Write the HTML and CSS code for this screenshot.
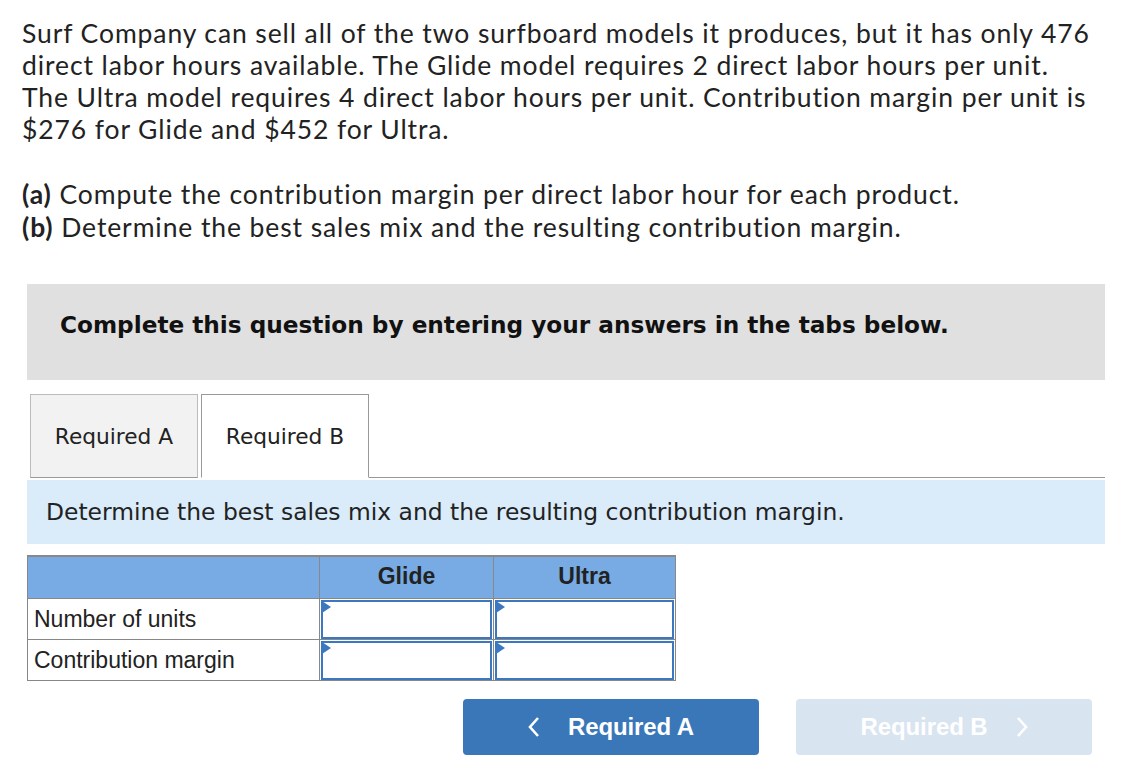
FILE: index.html
```html
<!DOCTYPE html>
<html>
<head>
<meta charset="utf-8">
<link rel="stylesheet" href="styles.css">
</head>
<body>
<div class="page">
  <p class="intro">Surf Company can sell all of the two surfboard models it produces, but it has only 476 direct labor hours available. The Glide model requires 2 direct labor hours per unit. The Ultra model requires 4 direct labor hours per unit. Contribution margin per unit is $276 for Glide and $452 for Ultra.</p>
  <p class="parts"><b>(a)</b> Compute the contribution margin per direct labor hour for each product.<br><b>(b)</b> Determine the best sales mix and the resulting contribution margin.</p>

  <div class="notice">Complete this question by entering your answers in the tabs below.</div>

  <div class="tabs">
    <div class="tab">Required A</div>
    <div class="tab active">Required B</div>
    <div class="tab-rest"></div>
  </div>

  <div class="instruction">Determine the best sales mix and the resulting contribution margin.</div>

  <table class="grid">
    <tr class="head">
      <th class="label"></th>
      <th class="col-g">Glide</th>
      <th class="col-u">Ultra</th>
    </tr>
    <tr>
      <td class="label">Number of units</td>
      <td class="cell"><div class="input"></div></td>
      <td class="cell"><div class="input"></div></td>
    </tr>
    <tr>
      <td class="label">Contribution margin</td>
      <td class="cell"><div class="input"></div></td>
      <td class="cell"><div class="input"></div></td>
    </tr>
  </table>

  <div class="nav">
    <button class="btn prev"><svg class="chev" width="12" height="22" viewBox="0 0 12 22"><polyline points="10,2 2,11 10,20" fill="none" stroke="#fff" stroke-width="2.6" stroke-linejoin="miter"/></svg>Required A</button>
    <button class="btn next" disabled>Required B<svg class="chev right" width="12" height="22" viewBox="0 0 12 22"><polyline points="2,2 10,11 2,20" fill="none" stroke="#fff" stroke-width="2.6" stroke-linejoin="miter"/></svg></button>
  </div>
</div>
</body>
</html>
```
FILE: styles.css
```css
html, body {
  margin: 0;
  padding: 0;
  background: #fff;
}
.page {
  width: 1078px;
  padding: 17px 0 0 27px;
}
.intro, .parts {
  font-family: Lato, "Open Sans", sans-serif;
  font-size: 26.5px;
  letter-spacing: 0.9px;
  line-height: 32px;
  color: #222;
  margin: 0 7px 0 -5px;
}
.parts {
  margin-top: 33px;
  line-height: 33px;
}
.parts b {
  font-weight: 700;
}
.notice {
  margin-top: 40px;
  height: 96px;
  box-sizing: border-box;
  background: #e0e0e0;
  padding: 27px 0 0 33px;
  font-family: "DejaVu Sans", Verdana, sans-serif;
  font-weight: bold;
  font-size: 23.2px;
  color: #111;
}
.tabs {
  display: flex;
  margin-top: 14px;
  height: 84px;
  align-items: stretch;
}
.tab {
  width: 168px;
  margin-left: 3px;
  border: 1px solid #bbb;
  border-bottom: 1px solid #999;
  background: #f2f2f2;
  display: flex;
  align-items: center;
  justify-content: center;
  font-family: "DejaVu Sans", Verdana, sans-serif;
  font-size: 21.7px;
  color: #222;
  box-sizing: border-box;
}
.tab.active {
  margin-left: 3px;
  background: #fff;
  border-color: #999;
  border-bottom: 1px solid #fff;
}
.tab-rest {
  flex: 1;
  border-bottom: 1px solid #999;
}
.instruction {
  margin-top: 2px;
  height: 64px;
  box-sizing: border-box;
  background: #daebf9;
  padding: 18px 0 0 19px;
  font-family: "DejaVu Sans", Verdana, sans-serif;
  font-size: 23.4px;
  color: #222;
}
.grid {
  margin-top: 11px;
  border-collapse: collapse;
  border: 1px solid #888;
  font-family: "Liberation Sans", Arial, sans-serif;
}
.grid th {
  background: #78abe3;
  height: 42px;
  padding: 0;
  font-size: 23px;
  font-weight: bold;
  color: #222;
  border: 1px solid #888;
  border-top: 2px solid #888;
  vertical-align: top;
  padding-top: 6px;
  box-sizing: border-box;
}
.grid th.label {
  width: 292px;
}
.grid th.col-g { width: 174px; }
.grid th.col-u { width: 182px; }
.grid td {
  border: 1px solid #888;
  padding: 0;
  height: 41px;
  box-sizing: border-box;
}
.grid td.label {
  font-size: 23px;
  color: #222;
  padding-left: 6px;
  padding-top: 1px;
}
.grid td.cell {
  padding: 1px 1px 0 1px;
}
.input {
  position: relative;
  height: 35px;
  border: 2px solid #3b78c0;
  background: #fff;
}
.input::before {
  content: "";
  position: absolute;
  left: -1px;
  top: -1px;
  border-left: 9px solid #3b78c0;
  border-top: 6px solid transparent;
  border-bottom: 6px solid transparent;
}
.nav {
  display: flex;
  justify-content: flex-end;
  gap: 37px;
  margin-top: 18px;
  padding-right: 13px;
}
.btn {
  width: 296px;
  height: 56px;
  border: none;
  border-radius: 4px;
  font-family: "Liberation Sans", Arial, sans-serif;
  font-weight: bold;
  font-size: 24px;
  letter-spacing: -0.1px;
  color: #fff;
  display: flex;
  align-items: center;
  justify-content: center;
  padding: 0;
}
.btn.prev {
  background: #3a77b9;
}
.btn.next {
  background: #d9e4f1;
}
.chev {
  margin-right: 28px;
}
.chev.right {
  margin-right: 0;
  margin-left: 28px;
}
```
